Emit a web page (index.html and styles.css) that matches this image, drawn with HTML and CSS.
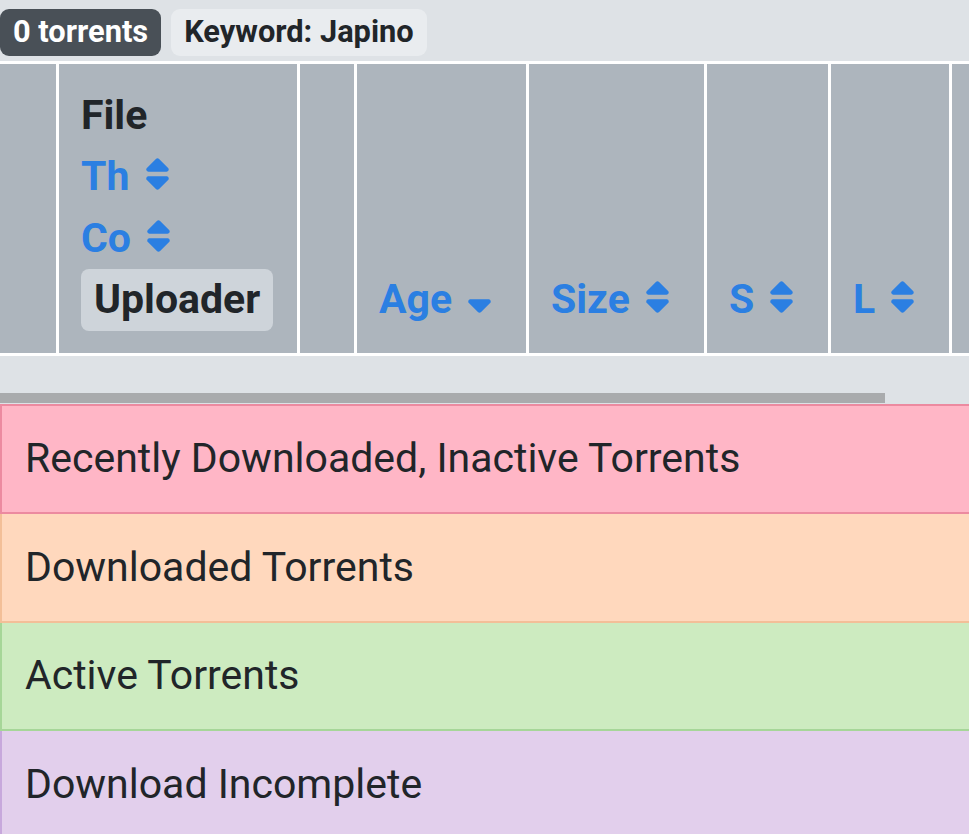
FILE: index.html
```html
<!DOCTYPE html>
<html lang="en">
<head>
<meta charset="utf-8">
<title>Torrents</title>
<link rel="stylesheet" href="styles.css">
</head>
<body>
<div class="page">
  <div class="badges">
    <span class="badge badge-dark">0 torrents</span>
    <span class="badge badge-light">Keyword: Japino</span>
  </div>

  <div class="table-wrap">
    <table class="results">
      <colgroup>
        <col class="w-check">
        <col class="w-file">
        <col class="w-icon">
        <col class="w-age">
        <col class="w-size">
        <col class="w-s">
        <col class="w-l">
        <col class="w-extra">
      </colgroup>
      <thead>
        <tr>
          <th></th>
          <th>
            <div class="line title">File</div>
            <div class="line"><a class="sort">Th <svg class="ico" viewBox="0 0 320 512"><path d="M137.4 41.4c12.5-12.5 32.8-12.5 45.3 0l128 128c9.2 9.2 11.9 22.9 6.9 34.9s-16.6 19.8-29.6 19.8H32c-12.9 0-24.600-7.8-29.6-19.8s-2.2-25.7 6.9-34.9l128-128zm0 429.3l-128-128c-9.2-9.2-11.9-22.9-6.9-34.9s16.6-19.8 29.6-19.8H288c12.9 0 24.6 7.8 29.6 19.8s2.2 25.7-6.9 34.9l-128 128c-12.5 12.5-32.8 12.5-45.3 0z"/></svg></a></div>
            <div class="line"><a class="sort">Co <svg class="ico" viewBox="0 0 320 512"><path d="M137.4 41.4c12.5-12.5 32.8-12.5 45.3 0l128 128c9.2 9.2 11.9 22.9 6.9 34.9s-16.6 19.8-29.6 19.8H32c-12.9 0-24.6-7.8-29.6-19.8s-2.2-25.7 6.9-34.9l128-128zm0 429.3l-128-128c-9.2-9.2-11.9-22.9-6.9-34.9s16.6-19.8 29.6-19.8H288c12.9 0 24.6 7.8 29.6 19.8s2.2 25.7-6.9 34.9l-128 128c-12.5 12.5-32.8 12.5-45.3 0z"/></svg></a></div>
            <div class="line"><span class="pill">Uploader</span></div>
          </th>
          <th></th>
          <th><a class="sort">Age <svg class="ico" viewBox="0 0 320 512"><path d="M137.4 470.6c12.5 12.5 32.8 12.5 45.3 0l128-128c9.2-9.2 11.9-22.9 6.9-34.9s-16.6-19.8-29.6-19.8H32c-12.9 0-24.6 7.8-29.6 19.8s-2.2 25.7 6.9 34.9l128 128z"/></svg></a></th>
          <th><a class="sort">Size <svg class="ico" viewBox="0 0 320 512"><path d="M137.4 41.4c12.5-12.5 32.8-12.5 45.3 0l128 128c9.2 9.2 11.9 22.9 6.9 34.9s-16.6 19.8-29.6 19.8H32c-12.9 0-24.6-7.8-29.6-19.8s-2.2-25.7 6.9-34.9l128-128zm0 429.3l-128-128c-9.2-9.2-11.9-22.9-6.9-34.9s16.6-19.8 29.6-19.8H288c12.9 0 24.6 7.8 29.6 19.8s2.2 25.7-6.9 34.9l-128 128c-12.5 12.5-32.8 12.5-45.3 0z"/></svg></a></th>
          <th><a class="sort">S <svg class="ico" viewBox="0 0 320 512"><path d="M137.4 41.4c12.5-12.5 32.8-12.5 45.3 0l128 128c9.2 9.2 11.9 22.9 6.9 34.9s-16.6 19.8-29.6 19.8H32c-12.9 0-24.6-7.8-29.6-19.8s-2.2-25.7 6.9-34.9l128-128zm0 429.3l-128-128c-9.2-9.2-11.9-22.9-6.9-34.9s16.6-19.8 29.6-19.8H288c12.9 0 24.6 7.8 29.6 19.8s2.2 25.7-6.9 34.9l-128 128c-12.5 12.5-32.8 12.5-45.3 0z"/></svg></a></th>
          <th><a class="sort">L <svg class="ico" viewBox="0 0 320 512"><path d="M137.4 41.4c12.5-12.5 32.8-12.5 45.3 0l128 128c9.2 9.2 11.9 22.9 6.9 34.9s-16.6 19.8-29.6 19.8H32c-12.9 0-24.6-7.8-29.6-19.8s-2.2-25.7 6.9-34.9l128-128zm0 429.3l-128-128c-9.2-9.2-11.9-22.9-6.9-34.9s16.6-19.8 29.6-19.8H288c12.9 0 24.6 7.8 29.6 19.8s2.2 25.7-6.9 34.9l-128 128c-12.5 12.5-32.8 12.5-45.3 0z"/></svg></a></th>
          <th></th>
        </tr>
      </thead>
    </table>
  </div>

  <div class="scroll-track"><div class="scroll-thumb"></div></div>

  <div class="legend">
    <div class="legend-row inactive">Recently Downloaded, Inactive Torrents</div>
    <div class="legend-row downloaded">Downloaded Torrents</div>
    <div class="legend-row active">Active Torrents</div>
    <div class="legend-row incomplete">Download Incomplete</div>
  </div>
</div>
</body>
</html>
```

FILE: styles.css
```css
* { box-sizing: border-box; }

html, body {
  margin: 0;
  padding: 0;
  background: #dee2e6;
  overflow: hidden;
}

body {
  font-family: Roboto, "Liberation Sans", sans-serif;
  font-size: 41px;
  line-height: 1.5;
  color: #212529;
}

.page {
  padding-top: 9px;
  width: 969px;
}

.badges {
  display: flex;
  gap: 10px;
  margin-bottom: 5px;
}

.badge {
  font-size: 30.8px;
  font-weight: 700;
  line-height: 1;
  padding: 8px 13px;
  border-radius: 9px;
  white-space: nowrap;
}

.badge-dark {
  background: #495057;
  color: #ffffff;
}

.badge-light {
  background: #e9ecef;
  color: #212529;
}

.table-wrap {
  overflow: hidden;
  width: 969px;
}

.results {
  table-layout: fixed;
  border-collapse: separate;
  border-spacing: 0;
  width: 1072px;
}

.w-check { width: 59px; }
.w-file { width: 241px; }
.w-icon { width: 57px; }
.w-age { width: 172px; }
.w-size { width: 178px; }
.w-s { width: 124px; }
.w-l { width: 121px; }
.w-extra { width: 120px; }

.results th {
  background: #adb5bd;
  border-top: 3px solid #ffffff;
  border-bottom: 3px solid #ffffff;
  border-right: 3px solid #ffffff;
  padding: 21px 20px 22px 22px;
  text-align: left;
  vertical-align: bottom;
  font-weight: 700;
  white-space: nowrap;
}

.line {
  height: 61.5px;
}

.title {
  color: #212529;
}

.sort {
  color: #2b7fe2;
  text-decoration: none;
}

.ico {
  width: 23px;
  height: 36px;
  fill: #2b7fe2;
  vertical-align: -2px;
  margin-left: 6px;
}

.pill {
  display: inline-block;
  background: #ced4da;
  color: #212529;
  border-radius: 8px;
  padding: 0 13px;
  line-height: 61.5px;
}

.scroll-track {
  margin-top: 37px;
  height: 10px;
  width: 969px;
}

.scroll-thumb {
  width: 885px;
  height: 10px;
  background: #a9abad;
}

.legend {
  margin-top: 1px;
  width: 969px;
}

.legend-row {
  padding: 22.5px 23px;
  border-left: 2px solid;
  border-bottom: 2px solid;
  line-height: 61.5px;
  color: #212529;
  white-space: nowrap;
}

.legend-row.inactive {
  background: #ffb6c6;
  border-color: #ec8aa0;
  border-top: 2px solid #ec8aa0;
}

.legend-row.downloaded {
  background: #ffd8bd;
  border-color: #f3bf98;
}

.legend-row.active {
  background: #cdebc0;
  border-color: #a6d698;
}

.legend-row.incomplete {
  background: #e2cfec;
  border-color: #c7a8dc;
}
```
